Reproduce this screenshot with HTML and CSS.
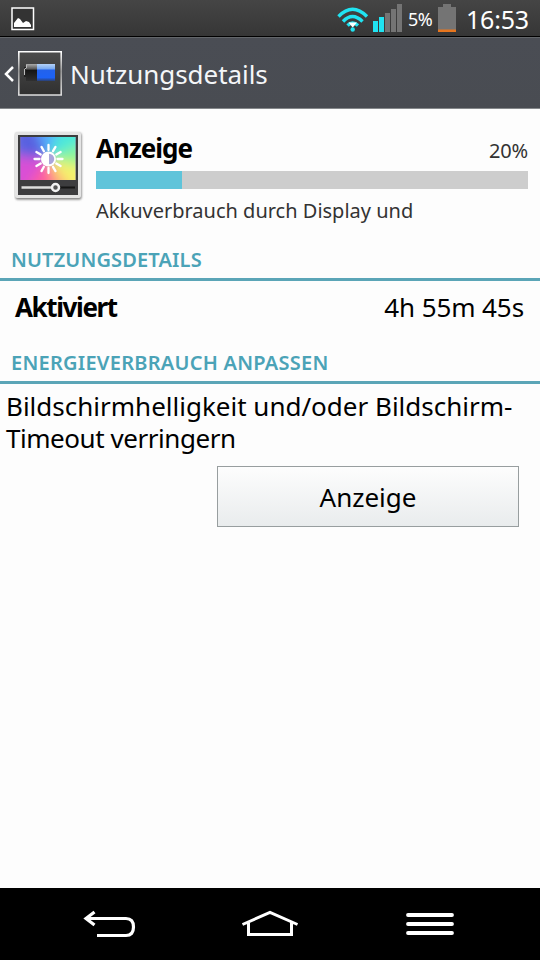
FILE: index.html
```html
<!DOCTYPE html>
<html lang="de">
<head>
<meta charset="utf-8">
<title>Nutzungsdetails</title>
<link rel="stylesheet" href="styles.css">
</head>
<body>
<div class="statusbar">
  <svg class="notice" width="24" height="24" viewBox="0 0 24 24"><path d="M1 1h21.500v21.500H1z" fill="#333" stroke="#fff" stroke-width="1.500"/><path d="M3 20v-4l4-5 2 1 3 4 3-2 3 1 2 3v2z" fill="#fff"/></svg>
  <svg class="wifi" width="32" height="26" viewBox="0 0 32 26"><g fill="none" stroke="#20e4f2" stroke-width="3.400"><path d="M1.500 9.500Q15.500-5 30 9.500"/><path d="M6 14.500Q15.500 4.500 25.500 14.500"/><path d="M10.500 18.500Q15.500 13.500 21 18.500"/></g><path d="M11.500 15.500h8.500l-4.300 5z" fill="#fff"/><circle cx="15.700" cy="22.500" r="2.200" fill="#20e4f2"/></svg>
  <svg class="signal" width="30" height="28" viewBox="0 0 30 28"><path d="M0 17h5v11H0zM6 13h5v15H6z" fill="#20e4f2"/><path d="M12 9h5v19h-5zM18 5h5v23h-5zM24 0h5v28h-5z" fill="#747474"/></svg>
  <span class="percent">5%</span>
  <svg class="battery" width="18" height="28" viewBox="0 0 18 28"><path d="M0 3h5V0h8v3h5v25H0z" fill="#747474"/><path d="M0 25.500h18V28H0z" fill="#e8761e"/></svg>
  <span class="clock">16:53</span>
</div>
<div class="actionbar">
  <svg class="up" width="12" height="18" viewBox="0 0 12 18"><path d="M10 2 3 9l7 7" fill="none" stroke="#fff" stroke-width="2.500"/></svg>
  <svg class="appicon" width="44" height="45" viewBox="0 0 44 45">
    <defs>
      <linearGradient id="frame" x2="0" y2="1"><stop stop-color="#fff"/><stop offset=".45" stop-color="#999"/><stop offset="1" stop-color="#ddd"/></linearGradient>
      <linearGradient id="panel" x2="0" y2="1"><stop stop-color="#4c4c4c"/><stop offset="1" stop-color="#303030"/></linearGradient>
      <linearGradient id="cell" x2="0" y2="1"><stop stop-color="#b4d2f8"/><stop offset=".28" stop-color="#7aaaf2"/><stop offset=".36" stop-color="#2362eb"/><stop offset=".8" stop-color="#1d62f5"/><stop offset="1" stop-color="#2b3f70"/></linearGradient>
      <linearGradient id="empty" x2="0" y2="1"><stop stop-color="#aaa"/><stop offset=".3" stop-color="#555"/><stop offset=".36" stop-color="#151515"/><stop offset="1" stop-color="#303030"/></linearGradient>
    </defs>
    <path d="M.8.800h42.400v43.200H.8z" fill="url(#panel)" stroke="url(#frame)" stroke-width="1.600"/>
    <path d="M6 16h3v10H6z" fill="#222"/><path d="M8 13h11v17H8z" fill="url(#empty)"/><path d="M6.500 24v-6l2-1v-3" fill="none" stroke="#bbb"/><path d="M19 13h18v17H19z" fill="url(#cell)"/>
  </svg>
  <span class="title">Nutzungsdetails</span>
</div>
<main class="content">
  <section class="summary">
    <svg class="displayicon" width="70" height="72" viewBox="0 0 70 72">
      <defs>
        <filter id="soft" x="-30%" y="-30%" width="160%" height="160%"><feGaussianBlur stdDeviation="6"/></filter>
        <filter id="shade" x="-10%" y="-10%" width="120%" height="120%"><feGaussianBlur stdDeviation="1"/></filter>
        <clipPath id="screen"><path d="M6.500 6h55v43h-55z"/></clipPath>
      </defs>
      <rect x="1.500" y="2" width="66" height="66.500" rx="2" fill="#777" filter="url(#shade)"/>
      <rect x="1" y="1" width="66" height="66" rx="2" fill="#e4e4e4"/>
      <path d="M4 4h60v60H4z" fill="#3d3d3f"/>
      <g clip-path="url(#screen)"><path d="M6 6h56v43H6z" fill="#b29be8"/><g filter="url(#soft)">
        <path d="M34 28 0 26V-8h20z" fill="#5961e0"/><path d="M34 28 20-8h26z" fill="#55adff"/><path d="M34 28 46-8h30v20z" fill="#4be8da"/><path d="M34 28 76 8v32z" fill="#8df598"/><path d="M34 28 76 36v26H56z" fill="#f5f26c"/><path d="M34 28 60 62H34z" fill="#ffab78"/><path d="M34 28 40 62H4z" fill="#ff5d9c"/><path d="M34 28 10 62H-6V24z" fill="#d950d5"/>
      </g></g>
      <g stroke="#fff" stroke-width="2.300" stroke-linecap="round"><path d="M34.500 14v5M34.500 37v5M20.500 28h5M43.500 28h5M27.500 15.900l2.400 4.300M39 35.800l2.500 4.300M22.400 21l4.300 2.500M42.300 32.500l4.300 2.500M22.400 35l4.300-2.500M42.300 23.500l4.300-2.500M27.500 40.100l2.400-4.300M39 20.200l2.500-4.300"/></g>
      <circle cx="34.500" cy="28" r="7.500" fill="#fff"/><path d="M35 22.800a5.200 5.200 0 0 1 0 10.400z" fill="#aaa5dc"/>
      <path d="M7.500 56.500h34" stroke="#dedede" stroke-width="2.300"/><path d="M42 56.500h19" stroke="#151515" stroke-width="2"/><circle cx="41.500" cy="56.500" r="3.500" fill="#555" stroke="#f2f2f2" stroke-width="2.500"/>
    </svg>
    <div class="details">
      <div class="heading"><span class="name">Anzeige</span><span class="share">20%</span></div>
      <div class="track"><div class="fill"></div></div>
      <div class="description">Akkuverbrauch durch Display und</div>
    </div>
  </section>
  <h2 class="section first"><span>NUTZUNGSDETAILS</span></h2>
  <div class="row"><span class="key">Aktiviert</span><span class="value">4h 55m 45s</span></div>
  <h2 class="section second"><span>ENERGIEVERBRAUCH ANPASSEN</span></h2>
  <p class="advice"><span class="line1">Bildschirmhelligkeit und/oder Bildschirm-</span><span class="line2">Timeout verringern</span></p>
  <button class="action">Anzeige</button>
</main>
<nav class="navbar">
  <svg width="54" height="28" viewBox="0 0 54 28"><path d="M3 8.500h40q7.500 0 7.500 8.500t-7.500 8.500H14" fill="none" stroke="#fff" stroke-width="3.200"/><path d="M11.500 2 3 8.500l8.500 6.500" fill="none" stroke="#fff" stroke-width="3.200"/></svg>
  <svg width="58" height="28" viewBox="0 0 58 28"><path d="M1.500 14.500 29 2.500l27.500 12M7.500 12v12.500h43V12" fill="none" stroke="#fff" stroke-width="3"/></svg>
  <svg width="48" height="24" viewBox="0 0 48 24"><path d="M2 3h44M2 12h44M2 21h44" fill="none" stroke="#fff" stroke-width="3.800" stroke-linecap="round"/></svg>
</nav>
</body>
</html>
```
FILE: styles.css
```css
* { box-sizing: border-box; }
body {
  margin: 0;
  width: 540px;
  height: 960px;
  display: flex;
  flex-direction: column;
  overflow: hidden;
  background: #fdfdfd;
  color: #000;
  font-family: "Noto Sans", sans-serif;
  white-space: nowrap;
}
svg { display: block; flex: none; }

.statusbar {
  height: 37px;
  display: flex;
  align-items: flex-start;
  padding-left: 11px;
  background: linear-gradient(#454545, #363636);
  border-bottom: 1px solid #000;
  color: #fff;
}
.notice { margin-top: 7px; }
.wifi { margin: 7px 0 0 302px; }
.signal { margin: 4px 0 0 4px; }
.percent { margin: 6px 0 0 5px; width: 25px; font-size: 18px; line-height: 26px; letter-spacing: -0.5px; }
.battery { margin: 4px 0 0 5px; }
.clock { margin: 3px 0 0 10px; font-size: 25px; line-height: 32px; letter-spacing: -0.2px; }

.actionbar {
  height: 72px;
  display: flex;
  align-items: center;
  padding-left: 3px;
  background: linear-gradient(#4a4d54, #494c52);
  border-top: 1px solid #63666a;
  border-bottom: 1px solid #85888b;
  color: #f4f6f8;
}
.up { margin-top: 1px; }
.appicon { margin-left: 3px; }
.title { margin: 2px 0 0 8px; font-size: 26px; line-height: 36px; letter-spacing: -0.05px; }

.content { flex: 1; display: flex; flex-direction: column; }
.summary { display: flex; height: 133px; padding: 22px 12px 0 14px; }
.details { flex: 1; margin-left: 12px; }
.heading { display: flex; justify-content: space-between; height: 40px; }
.name { margin-top: -1px; font-size: 26px; line-height: 36px; font-weight: 700; letter-spacing: -1px; }
.share { margin-top: 6px; font-size: 20px; line-height: 28px; letter-spacing: -0.2px; color: #333; }
.track { height: 18px; background: #cdcdcd; }
.fill { width: 86px; height: 18px; background: #5fc4da; }
.description { margin-top: 8px; font-size: 20px; line-height: 28px; color: #333; }

.section { margin: 0; padding-left: 11px; font-size: 20px; font-weight: 600; line-height: 28px; color: #4ba3b7; border-bottom: 3px solid #5ba5b7; }
.first { height: 39px; padding-top: 4px; letter-spacing: 0.15px; }
.row { display: flex; justify-content: space-between; height: 62px; padding: 8px 16px 0 15px; font-size: 26px; line-height: 36px; }
.key { font-weight: 700; letter-spacing: -1.4px; }
.value { letter-spacing: -0.1px; }
.second { height: 41px; padding-top: 6px; letter-spacing: 0.25px; }
.advice { margin: 6px 0 0 6px; font-size: 26px; line-height: 32px; }
.line1, .line2 { display: block; height: 32px; }
.line2 { letter-spacing: -0.45px; }
.action {
  align-self: flex-end;
  width: 302px;
  height: 61px;
  margin: 12px 21px 0 0;
  padding: 0;
  border: 1px solid #989e9f;
  border-radius: 0;
  background: linear-gradient(#fdfdfd, #e9eced);
  color: #000;
  font: 26px/36px "Noto Sans", sans-serif;
}

.navbar { height: 72px; display: flex; align-items: center; padding-left: 83px; background: #000; }
.navbar svg:nth-child(2) { margin-left: 104px; }
.navbar svg:nth-child(3) { margin-left: 107px; }
```
